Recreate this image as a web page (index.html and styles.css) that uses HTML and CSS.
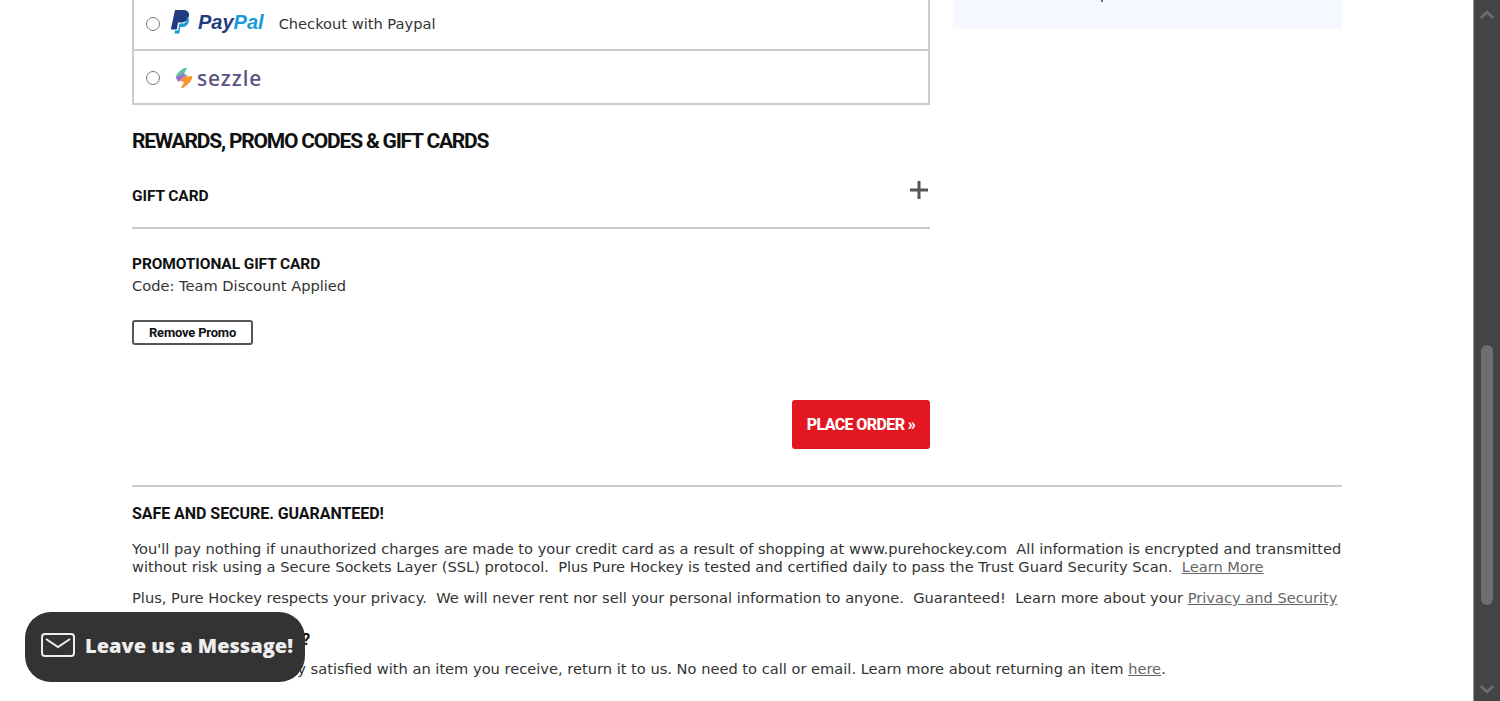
FILE: index.html
```html
<!DOCTYPE html>
<html lang="en">
<head>
<meta charset="UTF-8">
<title>Checkout</title>
<link rel="stylesheet" href="styles.css">
</head>
<body>
<div class="page">
  <main class="content">
    <div class="checkout">
      <div class="col-main">
        <div class="pay-box">
          <label class="pay-row paypal-row">
            <input type="radio" name="pay" class="pay-radio">
            <svg class="pp-icon" viewBox="0 0 20 24" width="20" height="24"><path fill="#253b80" d="M5 0h8c4 0 6.500 2 6 5.500-.6 4.500-3.500 7-8 7H8l-1.200 7H.8z"/><path fill="#179bd7" d="M16.500 6.500c2 1 2.800 2.800 2.300 5-.8 3.500-3 5.500-6.500 5.500h-2l-1 6.500H4.500l.5-3h3.200l1.200-7h3c3 0 4.800-2.500 4.600-7z"/></svg>
            <span class="pp-word"><span class="pp-pay">Pay</span><span class="pp-pal">Pal</span></span>
            <span class="pay-note">Checkout with Paypal</span>
          </label>
          <label class="pay-row sezzle-row">
            <input type="radio" name="pay" class="pay-radio">
            <svg class="sz-icon" viewBox="0 0 18 20" width="18" height="20"><path fill="#5fc8a0" d="M9 0l3 0-3 6 4 1-7 5-5-1c-1-4 3-8 8-11z"/><path fill="#a06cd5" d="M1 9l8-4 1 4-7 5z"/><path fill="#f79533" d="M8 9l9-1c1 4-3 8-9 12l-2 0 3-6-4-1z"/></svg>
            <span class="sz-word">sezzle</span>
          </label>
        </div>

        <h2 class="section-title">REWARDS, PROMO CODES &amp; GIFT CARDS</h2>

        <div class="gift-row">
          <h3 class="small-title">GIFT CARD</h3>
          <svg class="plus" viewBox="0 0 18 18" width="18" height="18"><path fill="#555" d="M7.500 0h3v7.500H18v3h-7.500V18h-3v-7.500H0v-3h7.500z"/></svg>
        </div>

        <div class="promo">
          <h3 class="small-title">PROMOTIONAL GIFT CARD</h3>
          <p class="promo-code">Code: Team Discount Applied</p>
          <button class="remove-btn">Remove Promo</button>
        </div>

        <div class="order-row"><button class="order-btn">PLACE ORDER »</button></div>
      </div>
      <aside class="side-panel"><span class="side-text">p</span></aside>
    </div>

    <section class="secure">
      <h3 class="secure-title">SAFE AND SECURE. GUARANTEED!</h3>
      <p class="two-line">You'll pay nothing if unauthorized charges are made to your credit card as a result of shopping at www.purehockey.com&nbsp; All information is encrypted and transmitted without risk using a Secure Sockets Layer (SSL) protocol.&nbsp; Plus Pure Hockey is tested and certified daily to pass the Trust Guard Security Scan.&nbsp; <a href="#">Learn More</a></p>
      <p>Plus, Pure Hockey respects your privacy.&nbsp; We will never rent nor sell your personal information to anyone.&nbsp; Guaranteed!&nbsp; Learn more about your <a href="#">Privacy and Security</a></p>
      <h3 class="secure-title returns">NOT REALLY SATISFIED?</h3>
      <p>If you're not completely satisfied with an item you receive, return it to us. No need to call or email. Learn more about returning an item <a href="#">here</a>.</p>
    </section>
  </main>

  <div class="scrollbar">
    <svg viewBox="0 0 14 9" width="14" height="9"><path fill="none" stroke="#6e6e6e" stroke-width="2.500" d="M1 8l6-6 6 6"/></svg>
    <div class="thumb"></div>
    <svg viewBox="0 0 14 9" width="14" height="9"><path fill="none" stroke="#6e6e6e" stroke-width="2.500" d="M1 1l6 6 6-6"/></svg>
  </div>
</div>

<button class="chat">
  <svg viewBox="0 0 34 24" width="34" height="24"><rect x="1" y="1" width="32" height="22" rx="3" fill="none" stroke="#eee" stroke-width="2"/><path fill="none" stroke="#eee" stroke-width="2" d="M5 6l12 8 12-8"/></svg>
  <span>Leave us a Message!</span>
</button>
</body>
</html>
```

FILE: styles.css
```css
*{box-sizing:border-box;margin:0;padding:0;}
html,body{height:100%;overflow:hidden;}
body{background:#fff;color:#333;font-family:"DejaVu Sans","Liberation Sans",sans-serif;font-size:14.63px;line-height:18px;}
.page{display:flex;height:701px;overflow:hidden;}
.content{flex:1;padding-left:132px;padding-right:131px;}
.checkout{display:flex;gap:23px;align-items:flex-start;}
.col-main{width:798px;flex:none;}

/* payment options, the top of the box is scrolled out of view */
.pay-box{border:2px solid #ccc;margin-top:-3px;}
.pay-row{display:flex;align-items:center;padding-left:12px;}
.paypal-row{height:52px;border-bottom:2px solid #ccc;}
.sezzle-row{height:52px;padding-top:2px;}
.pay-radio{width:14px;height:14px;margin:0 10px 0 0;flex:none;}
.pp-icon{margin-right:8px;margin-top:-4px;}
.pp-word{font:italic bold 20px "Liberation Sans",sans-serif;margin:-3px 15px 0 0;}
.pp-pay{color:#253b80;}
.pp-pal{color:#179bd7;}
.sz-icon{margin-right:4px;margin-left:5px;}
.sz-word{font:500 21px "Noto Sans",sans-serif;color:#5a5180;letter-spacing:.9px;}

.section-title{font:700 21px/26px Roboto,sans-serif;color:#111;letter-spacing:-1.2px;margin-top:23px;}
.small-title{font:700 15.5px/20px Roboto,sans-serif;color:#111;letter-spacing:-.1px;}
.gift-row{display:flex;justify-content:space-between;align-items:flex-start;height:56px;margin-top:19px;border-bottom:2px solid #ccc;padding-top:13px;}
.plus{margin:-5px 2px 0 0;}
.promo{padding-top:25px;}
.promo-code{line-height:20px;margin-top:2px;}
.remove-btn{display:block;width:121px;height:25px;margin-top:24px;background:#fff;border:2px solid #555;border-radius:3px;font:700 13px Roboto,sans-serif;color:#111;letter-spacing:-.2px;}
.order-row{display:flex;justify-content:flex-end;margin-top:55px;}
.order-btn{width:138px;height:49px;background:#e21722;border:none;border-radius:3px;color:#fff;font:800 16px Roboto,sans-serif;letter-spacing:-.6px;}

.side-panel{flex:1;height:60px;margin-top:-31px;background:#f5f8ff;padding:16px 0 0 147px;}

.secure{margin-top:36px;border-top:2px solid #ccc;padding-top:16px;}
.secure p{margin-bottom:13px;line-height:18px;}
.secure a{color:#666;text-decoration:underline;}
.secure-title{font:700 16px/22px Roboto,sans-serif;color:#111;letter-spacing:-.05px;margin-bottom:15px;}
.secure-title.returns{margin-top:22px;margin-bottom:9px;}

.scrollbar{width:27px;flex:none;background:#444;border-left:1px solid #999;position:relative;}
.scrollbar svg{position:absolute;left:6px;}
.scrollbar svg:first-child{top:10px;}
.scrollbar svg:last-child{bottom:7px;}
.thumb{position:absolute;left:7px;top:345px;width:12px;height:260px;border-radius:6px;background:#6e6e6e;}

/* floating chat button */
.chat{position:fixed;left:25px;top:612px;width:280px;height:70px;display:flex;align-items:center;gap:10px;padding:0 0 4px 16px;background:#333;border:none;border-radius:26px;color:#eee;font:800 20px "Open Sans",sans-serif;}
```
